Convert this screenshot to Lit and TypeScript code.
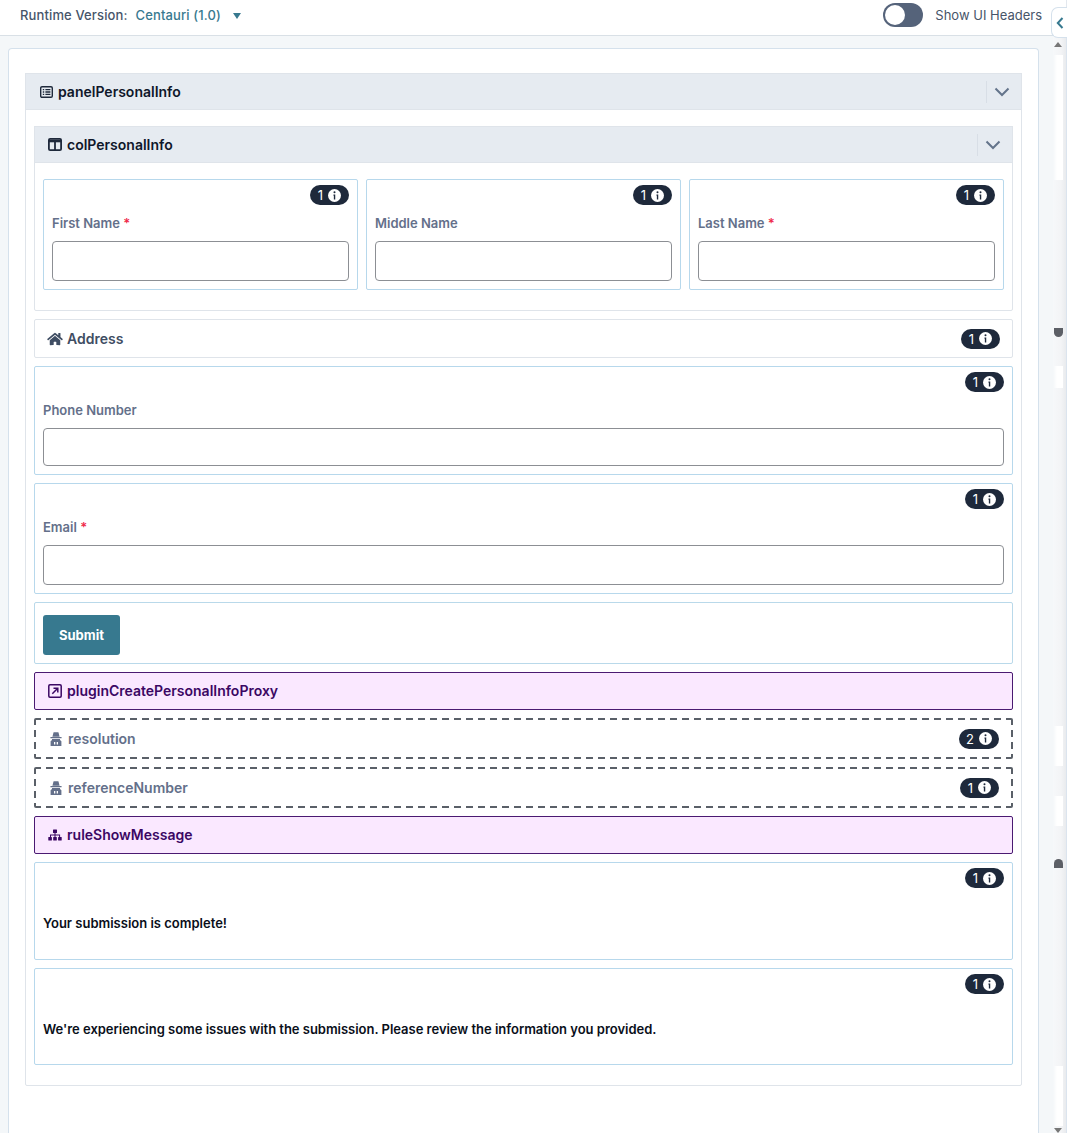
import { LitElement, html, css, svg } from "lit";
import { customElement } from "lit/decorators.js";

const HOME = "M280.37 148.26L96 300.11V464a16 16 0 0 0 16 16l112.06-.29a16 16 0 0 0 15.92-16V368a16 16 0 0 1 16-16h64a16 16 0 0 1 16 16v95.64a16 16 0 0 0 16 16.05L464 480a16 16 0 0 0 16-16V300L295.67 148.26a12.19 12.19 0 0 0-15.3 0zM571.6 251.47L488 182.56V44.05a12 12 0 0 0-12-12h-56a12 12 0 0 0-12 12v72.61L318.47 43a48 48 0 0 0-61 0L4.34 251.47a12 12 0 0 0-1.6 16.9l25.5 31A12 12 0 0 0 45.15 301l235.22-193.74a12.19 12.19 0 0 1 15.3 0L530.9 301a12 12 0 0 0 16.9-1.6l25.5-31a12 12 0 0 0-1.7-16.93z";

const listIcon = svg`<svg width="13" height="12" viewBox="0 0 13 12" fill="none"><rect x="0.7" y="0.7" width="11.6" height="10.6" rx="1.3" stroke="currentColor" stroke-width="1.4"/><path d="M2.8 3.6h1.4M2.8 6h1.4M2.8 8.4h1.4M5.4 3.6h5M5.4 6h5M5.4 8.4h5" stroke="currentColor" stroke-width="1.3"/></svg>`;
const colsIcon = svg`<svg width="14" height="13" viewBox="0 0 14 13" fill="none"><rect x="0.9" y="0.9" width="12.2" height="11.2" rx="1.2" stroke="currentColor" stroke-width="1.8"/><path d="M1 3h12" stroke="currentColor" stroke-width="2.6"/><path d="M7 3v9" stroke="currentColor" stroke-width="1.8"/></svg>`;
const homeIcon = svg`<svg width="16" height="14" viewBox="0 0 576 512" fill="currentColor"><path d="${HOME}"/></svg>`;
const extIcon = svg`<svg width="14" height="14" viewBox="0 0 14 14" fill="none"><rect x="0.8" y="0.8" width="12.4" height="12.4" rx="1.2" stroke="currentColor" stroke-width="1.5"/><path d="M4.3 9.7L9.5 4.5M5.5 4.2h4.3v4.3" stroke="currentColor" stroke-width="1.5"/></svg>`;
const secretIcon = svg`<svg width="12" height="14" viewBox="0 0 12 14" fill="currentColor"><path d="M3.6 .2h4.8l1.2 4.6H2.4z"/><rect x=".4" y="5" width="11.2" height="1.3" rx=".3"/><path fill-rule="evenodd" d="M2 7h8v1l1.4 1.2V14H.6V9.2L2 8zM4 10v2.6h1.3V10zM6.7 10v2.6H8V10z"/></svg>`;
const treeIcon = svg`<svg width="14" height="12" viewBox="0 0 14 12" fill="currentColor"><rect x="5" y="0.5" width="4" height="3.6" rx=".5"/><rect x="0.3" y="8" width="3.6" height="3.6" rx=".5"/><rect x="5.2" y="8" width="3.6" height="3.6" rx=".5"/><rect x="10.1" y="8" width="3.6" height="3.6" rx=".5"/><path d="M6.5 4h1v1.6h4.6v2.6h-1V6.6H7.5v1.6h-1V6.6H3v1.6H2V5.6h4.5z"/></svg>`;
const chevron = svg`<svg width="16" height="10" viewBox="0 0 16 10" fill="none"><path d="M1.5 1.5L8 8l6.5-6.5" stroke="#64748b" stroke-width="2"/></svg>`;
const infoIcon = svg`<svg class="info" width="13" height="13" viewBox="0 0 14 14"><circle cx="7" cy="7" r="7" fill="#fff"/><circle cx="7" cy="3.6" r="1.1" fill="#1e293b"/><path d="M5.9 6h1.9v5.2H6.3V7.2h-.4z" fill="#1e293b"/></svg>`;

@customElement("app-root")
export class AppRoot extends LitElement {
  static styles = css`
    :host { display: block; width: 1081px; height: 1133px; overflow: hidden; background: #fff; font-family: Inter, "Liberation Sans", sans-serif; position: relative; color: #0f172a; }
    .main { width: 1067px; height: 1133px; display: flex; flex-direction: column; box-sizing: border-box; }
    .top { height: 36px; flex: none; box-sizing: border-box; border-bottom: 1px solid #d9e0e6; border-right: 1px solid #e3e8ee; display: flex; align-items: center; padding: 0 24px 5px 20px; background: #fff; font-size: 13px; font-weight: 500; }
    .rv { color: #475569; margin-right: 8px; letter-spacing: .13px; }
    .cent { color: #37798f; margin-right: 12px; letter-spacing: .13px; }
    .caret { width: 0; height: 0; margin-top: 2px; border-left: 4.5px solid transparent; border-right: 4.5px solid transparent; border-top: 6.5px solid #37798f; }
    .spacer { flex: 1; }
    .switch { width: 40px; height: 24px; border-radius: 12px; background: #55637a; position: relative; margin-right: 12px; }
    .knob { position: absolute; left: 2px; top: 2px; width: 20px; height: 20px; border-radius: 50%; background: #fff; }
    .sui { color: #475569; font-weight: 400; }
    .content { flex: 1; background: #f4f7f9; padding: 12px 28px 0 8px; min-height: 0; }
    .card { background: #fff; border: 1px solid #d5e1ec; border-bottom: 0; border-radius: 4px 4px 0 0; height: 100%; box-sizing: border-box; padding: 24px 16px 0; }
    .panel { border: 1px solid #dfe4ea; border-radius: 2px; padding-bottom: 20px; }
    .hdr { height: 37px; margin: -1px -1px 0; box-sizing: border-box; background: #e6ebf1; border: 1px solid #dfe4ea; display: flex; align-items: center; padding-left: 14px; gap: 5px; font-size: 14px; font-weight: 600; color: #0f172a; }
    .hdr .ico { display: flex; color: #1e293b; }
    .hdr .name { flex: 1; }
    .hdr .chev { width: 35px; height: 22px; box-sizing: border-box; padding-right: 5px; border-left: 1px solid #d8dee6; display: flex; align-items: center; justify-content: center; }
    .body { padding: 16px 8px 0; display: flex; flex-direction: column; gap: 8px; }
    .col { border: 1px solid #dfe4ea; border-radius: 2px; }
    .col .hdr { padding-left: 13px; }
    .colbody { padding: 16px 8px 20px; display: grid; grid-template-columns: repeat(3, 1fr); gap: 8px; }
    .box { border: 1px solid #b7d8ec; border-radius: 2px; padding: 5px 8px 8px; display: flex; flex-direction: column; background: #fff; min-width: 0; }
    .badge { align-self: flex-end; flex: none; box-sizing: border-box; height: 20px; width: 39px; border-radius: 10px; background: #1e293b; color: #fff; display: flex; align-items: center; justify-content: center; gap: 5px; font-size: 13px; font-weight: 400; }
    .badge.wide { width: 40px; }
    .info { display: block; }
    label { display: block; margin-top: 8px; line-height: 20px; font-size: 13px; font-weight: 600; color: #64708a; }
    label b { color: #ef2b4a; font-weight: 600; }
    .input { margin-top: 8px; height: 40px; box-sizing: border-box; border: 1px solid #8c8f94; border-radius: 4px; background: #fff; }
    .input.short { height: 38px; }
    .row { height: 39px; box-sizing: border-box; border: 1px solid #dfe4ea; border-radius: 2px; display: flex; align-items: center; padding: 0 12px; gap: 4px; font-size: 14px; font-weight: 600; color: #475569; }
    .row .name { flex: 1; }
    .row .ico { display: flex; }
    .row .badge { align-self: center; }
    .addr { color: #3f4d63; }
    .btnbox { border: 1px solid #b9d9ea; border-radius: 2px; padding: 12px 8px 8px; }
    .btn { width: 77px; height: 40px; background: #37798f; color: #fff; border-radius: 3px; font-size: 13px; font-weight: 700; display: flex; align-items: center; justify-content: center; }
    .pink { height: 38px; background: #fae8ff; border: 1px solid #4a1a72; color: #3b0764; gap: 5px; padding: 0 12px 1px 13px; }
    .pink .ico { margin-top: 1px; }
    .dash { height: 41px; border: 0; border-radius: 2px; color: #64708a; padding: 0 14px 0 16px; gap: 6px;
      background-image:
        repeating-linear-gradient(90deg, #5a6068 0 7px, transparent 7px 12px),
        repeating-linear-gradient(90deg, #5a6068 0 7px, transparent 7px 12px),
        repeating-linear-gradient(180deg, #5a6068 0 7px, transparent 7px 12px),
        repeating-linear-gradient(180deg, #5a6068 0 7px, transparent 7px 12px);
      background-size: 100% 2px, 100% 2px, 2px 100%, 2px 100%;
      background-position: 0 0, 0 100%, 0 0, 100% 0;
      background-repeat: no-repeat;
    }
    .msg { font-size: 13px; font-weight: 600; color: #0a0f1a; line-height: 20px; margin-top: 25px; padding-bottom: 18px; }
    .msg.m2 { padding-bottom: 17px; letter-spacing: -.02px; }
    .scroll { position: absolute; left: 1053px; top: 36px; width: 13px; height: 1097px; background: linear-gradient(90deg, #f6f8fa, #f3f4f6 60%, #e9ebee); border-right: 1px solid #dbe4ee; }
    .seg { position: absolute; left: 0; width: 10px; background: linear-gradient(90deg, #f4f7f9, #fff 40%); }
    .arrow-up { position: absolute; left: 1px; top: 6px; border-left: 4.5px solid transparent; border-right: 4.5px solid transparent; border-bottom: 5px solid #777; }
    .arrow-dn { position: absolute; left: 1px; bottom: 0; border-left: 4.5px solid transparent; border-right: 4.5px solid transparent; border-top: 5px solid #777; }
    .cap { position: absolute; left: 1px; width: 9px; height: 9px; background: #5c5f66; }
    .cap.d { border-radius: 0 0 5px 5px; top: 292px; }
    .cap.u { border-radius: 5px 5px 0 0; top: 823px; }
    .tab { position: absolute; left: 1051px; top: 7px; width: 16px; height: 31px; box-sizing: border-box; background: #fff; border: 1px solid #d5e1ec; border-right: 0; border-radius: 7px 0 0 7px; display: flex; align-items: center; justify-content: center; }
  `;

  badge(n = 1) {
    return html`<span class="badge ${n > 1 ? "wide" : ""}">${n}${infoIcon}</span>`;
  }
  field(text: string, req: boolean) {
    return html`<div class="box">${this.badge()}<label>${text}${req ? html` <b>*</b>` : ""}</label><div class="input"></div></div>`;
  }

  render() {
    return html`
      <div class="main">
        <div class="top">
          <span class="rv">Runtime Version:</span><span class="cent">Centauri (1.0)</span><span class="caret"></span>
          <span class="spacer"></span>
          <span class="switch"><span class="knob"></span></span><span class="sui">Show UI Headers</span>
        </div>
        <div class="content">
          <div class="card">
            <div class="panel">
              <div class="hdr"><span class="ico">${listIcon}</span><span class="name">panelPersonalInfo</span><span class="chev">${chevron}</span></div>
              <div class="body">
                <div class="col">
                  <div class="hdr"><span class="ico">${colsIcon}</span><span class="name">colPersonalInfo</span><span class="chev">${chevron}</span></div>
                  <div class="colbody">
                    ${this.field("First Name", true)}
                    ${this.field("Middle Name", false)}
                    ${this.field("Last Name", true)}
                  </div>
                </div>
                <div class="row addr"><span class="ico">${homeIcon}</span><span class="name">Address</span>${this.badge()}</div>
                <div class="box">${this.badge()}<label>Phone Number</label><div class="input short"></div></div>
                <div class="box">${this.badge()}<label>Email <b>*</b></label><div class="input"></div></div>
                <div class="btnbox"><div class="btn">Submit</div></div>
                <div class="row pink"><span class="ico">${extIcon}</span><span class="name">pluginCreatePersonalInfoProxy</span></div>
                <div class="row dash"><span class="ico">${secretIcon}</span><span class="name">resolution</span>${this.badge(2)}</div>
                <div class="row dash"><span class="ico">${secretIcon}</span><span class="name">referenceNumber</span>${this.badge()}</div>
                <div class="row pink"><span class="ico">${treeIcon}</span><span class="name">ruleShowMessage</span></div>
                <div class="box">${this.badge()}<div class="msg">Your submission is complete!</div></div>
                <div class="box">${this.badge()}<div class="msg m2">We're experiencing some issues with the submission. Please review the information you provided.</div></div>
              </div>
            </div>
          </div>
        </div>
      </div>
      <div class="scroll">
        <div class="seg" style="top:19px;height:125px"></div>
        <div class="seg" style="top:330px;height:22px"></div>
        <div class="seg" style="top:690px;height:40px"></div>
        <div class="seg" style="top:760px;height:30px"></div>
        <div class="seg" style="top:1030px;height:60px"></div>
        <div class="arrow-up"></div>
        <div class="cap d"></div>
        <div class="cap u"></div>
        <div class="arrow-dn"></div>
      </div>
      <div class="tab"><svg width="8" height="12" viewBox="0 0 8 12" fill="none"><path d="M6.5 1L1.8 6l4.7 5" stroke="#37798f" stroke-width="2"/></svg></div>
    `;
  }
}
